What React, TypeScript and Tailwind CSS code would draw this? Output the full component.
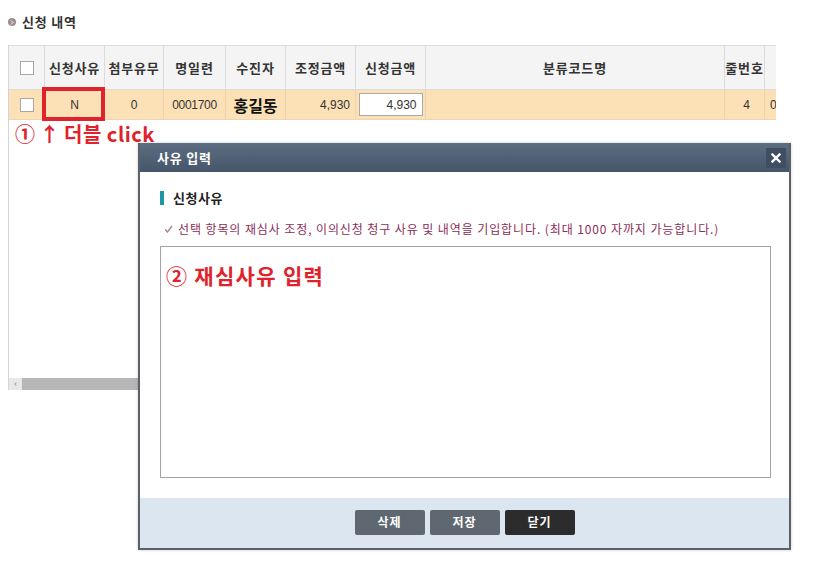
import React from "react";

const font = { fontFamily: '"Noto Sans CJK KR", "Noto Sans", sans-serif' };

const cols = [
  { key: "chk", w: "w-[36px]", label: "" },
  { key: "reason", w: "w-[60px]", label: "신청사유" },
  { key: "attach", w: "w-[59px]", label: "첨부유무" },
  { key: "serial", w: "w-[62px]", label: "명일련" },
  { key: "patient", w: "w-[60px]", label: "수진자" },
  { key: "adj", w: "w-[70px]", label: "조정금액" },
  { key: "req", w: "w-[70px]", label: "신청금액" },
  { key: "code", w: "w-[299px]", label: "분류코드명" },
  { key: "line", w: "w-[40px]", label: "줄번호" },
  { key: "more", w: "w-[40px]", label: "" },
];

function Checkbox() {
  return <span className="block w-[14px] h-[14px] border border-[#a8a8a8] bg-white" />;
}

function HistoryTable() {
  return (
    <div className="ml-[8px] mt-[14px] w-[768px] h-[345px] border-l border-[#d4d4d4] flex flex-col overflow-hidden relative">
      {/* header */}
      <div className="flex h-[45px] bg-[#f4f4f4] border-t border-b border-[#dcdcdc] shrink-0">
        {cols.map((c) => (
          <div
            key={c.key}
            className={`${c.w} shrink-0 flex items-center justify-center border-r border-[#dcdcdc] text-[13px] font-bold text-[#333] tracking-[0.8px]`}
          >
            {c.key === "chk" ? <Checkbox /> : c.label}
          </div>
        ))}
      </div>
      {/* data row */}
      <div className="flex h-[30px] bg-[#fde1b6] border-b border-[#ead5b8] shrink-0 text-[12px] text-[#333]" style={{ fontFamily: '"Liberation Sans", sans-serif' }}>
        <div className="w-[36px] shrink-0 flex items-center justify-center border-r border-[#ecd3ae]">
          <Checkbox />
        </div>
        <div className="w-[60px] shrink-0 flex items-center justify-center border-r border-[#ecd3ae]">N</div>
        <div className="w-[59px] shrink-0 flex items-center justify-center border-r border-[#ecd3ae]">0</div>
        <div className="w-[62px] shrink-0 flex items-center justify-center border-r border-[#ecd3ae] tracking-[-0.3px]">0001700</div>
        <div className="w-[60px] shrink-0 flex items-center justify-center border-r border-[#ecd3ae] text-[16px] font-bold text-[#111]" style={font}>
          홍길동
        </div>
        <div className="w-[70px] shrink-0 flex items-center justify-end pr-[5px] border-r border-[#ecd3ae]">4,930</div>
        <div className="w-[70px] shrink-0 flex items-center justify-center border-r border-[#ecd3ae]">
          <div className="w-[64px] h-[23px] bg-white border border-[#a9a9a9] flex items-center justify-end pr-[5px]">4,930</div>
        </div>
        <div className="w-[299px] shrink-0 border-r border-[#ecd3ae]" />
        <div className="w-[40px] shrink-0 flex items-center justify-end pr-[14px] border-r border-[#ecd3ae]">4</div>
        <div className="w-[40px] shrink-0 flex items-center pl-[5px]">0</div>
      </div>
      {/* annotation */}
      <div className="pl-[6px] pt-[2px] text-[20px] font-bold text-[#e0222c] leading-[24px] flex items-center gap-[4px] tracking-[0.5px]" style={font}>
        <span>①</span>
        <span>↑</span>
        <span>더블 click</span>
      </div>
      <div className="flex-1" />
      {/* scrollbar */}
      <div className="h-[12px] flex shrink-0">
        <div className="w-[13px] bg-[#e8e8e8] flex items-center justify-center text-[9px] text-[#777]">‹</div>
        <div className="flex-1 bg-[#b6b6b6]" />
      </div>
      {/* red highlight over 신청사유 cell */}
      <div className="absolute left-[33px] top-[42px] w-[63px] h-[34px] border-[4px] border-[#e0222c]" />
    </div>
  );
}

function ReasonDialog() {
  return (
    <div className="absolute left-[138px] top-[143px] w-[653px] h-[407px] bg-white border-x-2 border-b-2 border-[#5c6168] flex flex-col shadow-[0_0_3px_rgba(0,0,0,0.2)]" style={font}>
      <div className="h-[29px] shrink-0 bg-gradient-to-b from-[#5d6e82] to-[#46566a] flex items-center justify-between pl-[17px] pr-[3px]">
        <span className="text-white text-[13px] font-bold tracking-[0.8px]">사유 입력</span>
        <button className="w-[20px] h-[20px] bg-[#3f4e60] flex items-center justify-center">
          <svg width="10" height="10" viewBox="0 0 10 10">
            <path d="M1.5 1.5 L8.5 8.5 M8.5 1.5 L1.5 8.5" stroke="white" strokeWidth="2.4" strokeLinecap="square" />
          </svg>
        </button>
      </div>
      <div className="flex-1 px-[20px] pt-[19px] flex flex-col">
        <div className="flex items-center gap-[9px] h-[14px]">
          <span className="w-[4px] h-[14px] bg-[#1f96a3]" />
          <span className="text-[13px] font-bold text-[#222] tracking-[0.5px]">신청사유</span>
        </div>
        <div className="mt-[17px] pl-[4px] flex items-center gap-[5px] text-[12px] text-[#8c2e57] h-[14px] tracking-[0.9px] whitespace-nowrap">
          <svg width="9" height="8" viewBox="0 0 9 8">
            <path d="M1 4.5 L3.5 7 L8 1" stroke="#a9879c" strokeWidth="1.5" fill="none" />
          </svg>
          <span>선택 항목의 재심사 조정, 이의신청 청구 사유 및 내역을 기입합니다. (최대 1000 자까지 가능합니다.)</span>
        </div>
        <div className="mt-[10px] w-[611px] h-[232px] border border-[#a3a3a3] px-[5px] pt-[13px]">
          <span className="text-[21px] font-bold text-[#e0222c] tracking-[1.3px]">② 재심사유 입력</span>
        </div>
      </div>
      <div className="h-[50px] shrink-0 bg-[#dce6f0] flex items-center justify-center gap-[5px] pb-[2px]">
        <button className="w-[70px] h-[25px] rounded-[2px] bg-[#5f6870] text-white text-[12px] font-bold tracking-[1px]">삭제</button>
        <button className="w-[70px] h-[25px] rounded-[2px] bg-[#5f6870] text-white text-[12px] font-bold tracking-[1px]">저장</button>
        <button className="w-[70px] h-[25px] rounded-[2px] bg-[#2c2c2c] text-white text-[12px] font-bold tracking-[1px]">닫기</button>
      </div>
    </div>
  );
}

export default function App() {
  return (
    <div className="relative w-[815px] h-[567px] bg-white overflow-hidden" style={font}>
      <div className="pt-[13px] pl-[8px] flex items-center gap-[6px] h-[31px]">
        <span className="w-[8px] h-[8px] rounded-full bg-[#9a8f8a] flex items-center justify-center">
          <svg width="4" height="5" viewBox="0 0 4 5">
            <path d="M1 0.5 L3 2.5 L1 4.5" stroke="white" strokeWidth="1" fill="none" />
          </svg>
        </span>
        <span className="text-[13px] font-bold text-[#333] tracking-[0.8px]">신청 내역</span>
      </div>
      <HistoryTable />
      <ReasonDialog />
    </div>
  );
}
